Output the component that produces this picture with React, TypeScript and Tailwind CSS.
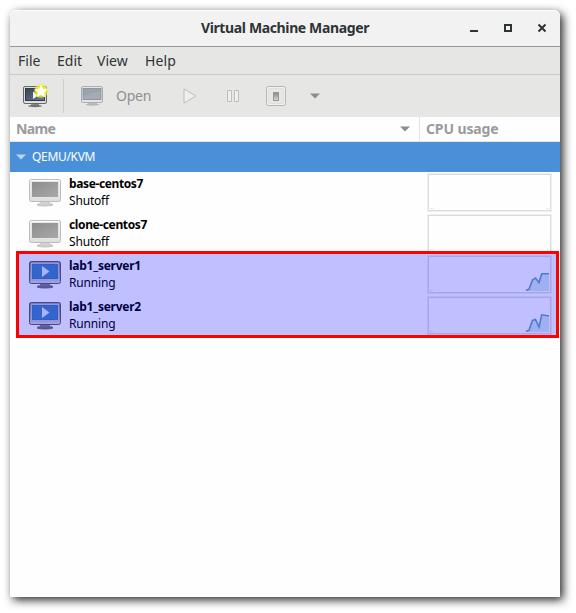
import React from "react";

type Vm = { name: string; status: string; running: boolean; points: string };

const machines: Vm[] = [
  { name: "base-centos7", status: "Shutoff", running: false, points: "" },
  { name: "clone-centos7", status: "Shutoff", running: false, points: "" },
  { name: "lab1_server1", status: "Running", running: true, points: "99,35.3 102,34.3 105.500,25 108.500,23 112,27.500 114.700,18.800 122,18.800" },
  { name: "lab1_server2", status: "Running", running: true, points: "99,35.3 102,34.3 105.500,24.500 108.500,23.500 112,31 114.700,18.800 122,20" },
];

function Monitor({ running }: { running: boolean }) {
  return (
    <svg width="32" height="28" viewBox="0 0 32 28" className="shrink-0">
      <defs>
        <linearGradient id="bezelOff" x1="0" y1="0" x2="0" y2="1">
          <stop offset="0" stopColor="#f6f6f6" />
          <stop offset="1" stopColor="#dedede" />
        </linearGradient>
        <linearGradient id="bezelOn" x1="0" y1="0" x2="0" y2="1">
          <stop offset="0" stopColor="#858585" />
          <stop offset=".75" stopColor="#b4b4b4" />
          <stop offset="1" stopColor="#e0e0e0" />
        </linearGradient>
        <linearGradient id="glassOff" x1="0" y1="0" x2="1" y2="1">
          <stop offset="0" stopColor="#8d8d8d" />
          <stop offset="1" stopColor="#a9a9a9" />
        </linearGradient>
      </defs>
      <ellipse cx="16" cy="25.7" rx="8" ry="1.3" fill={running ? "#777" : "#d0d0d0"} stroke={running ? "#50525a" : "#b4b4b4"} strokeWidth=".8" />
      <path d="M11 22.500h10v2.300H11z" fill={running ? "#858585" : "#d2d2d2"} />
      <rect x=".5" y=".5" width="31" height="22" rx="1.8" fill={running ? "url(#bezelOn)" : "url(#bezelOff)"} stroke={running ? "#5f6068" : "#bcbcbc"} />
      <path d="M2 1.5h28" stroke={running ? "#a5a5a5" : "#fff"} />
      <rect x="2.5" y="2.5" width="27" height="16" fill={running ? "#4487bd" : "url(#glassOff)"} stroke={running ? "#c6c6c6" : "#e5e5e5"} />
      {running && <rect x="3.5" y="3.5" width="25" height="14" fill="none" stroke="#3d7db8" />}
      {running && <path d="M13 5v11l7.5-5.5z" fill="#e4eaf2" />}
    </svg>
  );
}

function NewVmIcon() {
  return (
    <svg width="26" height="24" viewBox="0 0 26 24" className="shrink-0">
      <defs>
        <radialGradient id="glow">
          <stop offset=".5" stopColor="#f1ef18" />
          <stop offset=".8" stopColor="#efed2c" stopOpacity=".75" />
          <stop offset="1" stopColor="#f1ef18" stopOpacity="0" />
        </radialGradient>
        <linearGradient id="glassNew" x1="0" y1="0" x2="1" y2="1">
          <stop offset="0" stopColor="#364453" />
          <stop offset="1" stopColor="#6b7b8b" />
        </linearGradient>
      </defs>
      <path d="M8 20h8v2H8z" fill="#8a8a8a" />
      <ellipse cx="12" cy="22" rx="7" ry="1.2" fill="#70736f" />
      <rect x=".5" y="2.5" width="23" height="17" rx="1.5" fill="#dedede" stroke="#666966" />
      <rect x="2.5" y="4.5" width="19" height="12" fill="url(#glassNew)" stroke="#2e3c4c" />
      <path d="M10 7.5v7.500l5-3.500z" fill="#f5f5f5" />
      <circle cx="18" cy="7" r="7.500" fill="url(#glow)" />
      <path d="m18.200 1 1.700 4 4.200.5-3.100 3 .9 4.400-3.900-2.300-3.800 2.200.9-4.300-3.200-3 4.400-.5z" fill="#fffffb" stroke="#fffffb" strokeWidth=".5" strokeLinejoin="round" />
    </svg>
  );
}

function OpenIcon() {
  return (
    <svg width="24" height="20" viewBox="0 0 24 20" className="shrink-0">
      <path d="M7 16h9v2.500H7z" fill="#c3c4c4" />
      <ellipse cx="11.500" cy="18.500" rx="6.800" ry="1.200" fill="#b4b5b5" />
      <rect x=".5" y=".5" width="21" height="16" rx="1.500" fill="#e5e5e5" stroke="#adafaf" />
      <rect x="2" y="2.500" width="18" height="11" fill="#9ba3ac" stroke="#8e98a2" />
      <path d="M2.500 10 19.500 5v8h-17z" fill="#a4abb2" />
    </svg>
  );
}

function UsageGraph({ points }: { points: string }) {
  return (
    <svg width="125" height="39" viewBox="0 0 125 39" className="shrink-0">
      <rect x=".5" y=".5" width="124" height="38" fill="none" stroke="#f0eeef" />
      <rect x="1.500" y="1.500" width="122" height="36" fill="#fefefe" stroke="#dedadc" />
      <path d="M3 35.500h3" stroke="#d8edf7" />
      {points ? (
        <>
          <polygon points={`99,36 ${points} 122,36`} fill="#d2e7ed" />
          <polyline points={points} fill="none" stroke="#68a4b8" strokeWidth="1.600" />
        </>
      ) : (
        <path d="M119 35.500h3" stroke="#d8edf7" />
      )}
    </svg>
  );
}

function MachineRow({ vm }: { vm: Vm }) {
  return (
    <div className="flex h-[41px] pl-[19px] pr-2">
      <div className="pt-[7px]"><Monitor running={vm.running} /></div>
      <div className="ml-2 flex-1 pt-1 text-[12px] leading-4 text-black">
        <div className={vm.running ? "font-bold tracking-[-0.250px]" : "font-bold tracking-[-0.380px]"}>{vm.name}</div>
        <div className="pt-px tracking-[-0.180px]">{vm.status}</div>
      </div>
      <div className="pt-px"><UsageGraph points={vm.points} /></div>
    </div>
  );
}

export default function App() {
  return (
    <div className="h-[613px] w-[576px] overflow-hidden bg-white pl-[10px] pt-[10px] font-['Noto_Sans',sans-serif]">
      <div className="relative flex h-[587px] w-[550px] flex-col rounded-t-[6px] bg-[#fefefe] shadow-[3px_3px_10px_rgba(0,0,0,0.85)]">
        <div className="flex h-[37px] items-center rounded-t-[6px] border-b border-[#989994] bg-[#f2f2f2] shadow-[inset_0_1px_0_white]">
          <div className="w-[100px]" />
          <h1 className="flex-1 whitespace-nowrap text-center text-[14px] font-bold leading-5 tracking-[-0.370px] text-[#2e3436]">Virtual Machine Manager</h1>
          <svg width="100" height="20" viewBox="0 0 100 20" fill="none" stroke="#2e3436" strokeWidth="2" className="shrink-0">
            <path d="M10 13h8M45 7h6v6h-6z" />
            <path d="m78.500 6.500 7 7m0-7-7 7" />
          </svg>
        </div>
        <nav className="flex h-[28px] shrink-0 items-center border-b border-[#cacac8] bg-[#e6e6e4] pl-2 text-[14px] leading-5 text-[#2e3436]">
          <span className="w-[39px]">File</span>
          <span className="w-[40px]">Edit</span>
          <span className="w-[48px]">View</span>
          <span className="tracking-[0.100px]">Help</span>
        </nav>
        <div className="flex h-[42px] shrink-0 items-center bg-[#e6e6e4] pl-[13px]">
          <NewVmIcon />
          <div className="ml-[14px] h-[34px] w-px bg-[#cfcfcd]" />
          <div className="ml-[17px]"><OpenIcon /></div>
          <span className="ml-[11px] w-[66px] text-[14px] leading-5 tracking-[-0.250px] text-[#8e9192]">Open</span>
          <svg width="16" height="16" viewBox="0 0 16 16" fill="#efefee" stroke="#bcbebc" className="shrink-0"><path d="M2 1v14l12-7z" /></svg>
          <svg width="14" height="14" viewBox="0 0 14 14" fill="#efefee" stroke="#bcbebc" className="ml-[28px] shrink-0"><path d="M1.500 1.500h4v11h-4zM8.500 1.500h4v11h-4z" /></svg>
          <svg width="20" height="20" viewBox="0 0 20 20" className="ml-[26px] shrink-0">
            <defs><linearGradient id="power" x1="0" y1="0" x2="0" y2="1"><stop stopColor="#858585" /><stop offset="1" stopColor="#dadada" /></linearGradient></defs>
            <rect x=".5" y=".5" width="19" height="19" rx="2" fill="#efefee" stroke="#b6b7b5" />
            <rect x="2.500" y="2.500" width="15" height="15" rx="1" fill="#e7e7e6" stroke="#dededc" />
            <rect x="7.500" y="6.500" width="5" height="8" fill="url(#power)" stroke="#969896" />
          </svg>
          <svg width="10" height="6" viewBox="0 0 10 6" className="ml-[24px] shrink-0"><path d="M0 .5h10L5 5.500z" fill="#8b8e8f" /></svg>
        </div>
        <div className="flex h-[25px] shrink-0 border-b border-[#e4e4e2] text-[14px] font-bold leading-6 text-[#999b9b]">
          <div className="flex w-[410px] items-center justify-between border-r border-[#e4e4e2] pl-[6px] pr-[9px]">
            <span className="tracking-[-0.600px]">Name</span>
            <svg width="10" height="6" viewBox="0 0 10 6"><path d="M0 .5h10L5 5.500z" fill="#8b8e8f" /></svg>
          </div>
          <span className="pl-[6px] tracking-[-0.120px]">CPU usage</span>
        </div>
        <div className="flex h-[30px] shrink-0 items-center bg-[#4a90d9] pl-[6px] text-[12px] text-white">
          <svg width="10" height="6" viewBox="0 0 10 6"><path d="M0 .5h10L5 5.500z" fill="#b9d5ef" /></svg>
          <span className="ml-[6px] tracking-[-0.320px]">QEMU/KVM</span>
        </div>
        {machines.map((vm) => <MachineRow key={vm.name} vm={vm} />)}
        <div className="absolute left-[6px] top-[241px] h-[87px] w-[543px] border-[3px] border-[#ff0000] bg-[#0000ff]/[0.245] bg-clip-padding" />
      </div>
    </div>
  );
}
